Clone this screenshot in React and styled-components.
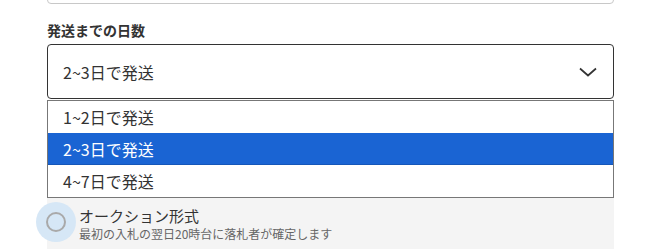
import React from "react";
import styled, { createGlobalStyle } from "styled-components";

const GlobalStyle = createGlobalStyle`
    html, body {
        margin: 0;
        padding: 0;
        background: #fff;
        overflow: hidden;
    }
    body {
        font-family: "Noto Sans CJK JP", "Noto Sans", sans-serif;
        color: #333;
    }
`;

const options = ["1~2日で発送", "2~3日で発送", "4~7日で発送"];

const App = () => {
    const selected = 1;
    return (
        <Wrapper>
            <GlobalStyle />
            <PrevInput />
            <Label>発送までの日数</Label>
            <SelectBox>
                <span>{options[selected]}</span>
                <svg width="18" height="10" viewBox="0 0 18 10">
                    <polyline
                        points="1,1.5 9,8.5 17,1.5"
                        fill="none"
                        stroke="#333"
                        strokeWidth="1.7"
                    />
                </svg>
            </SelectBox>
            <OptionList>
                {options.map((o, i) => (
                    <Option key={o} $active={i === selected}>
                        {o}
                    </Option>
                ))}
            </OptionList>
            <RadioPanel>
                <Radio>
                    <span className="ring" />
                </Radio>
                <div>
                    <RadioTitle>オークション形式</RadioTitle>
                    <RadioNote>最初の入札の翌日20時台に落札者が確定します</RadioNote>
                </div>
            </RadioPanel>
        </Wrapper>
    );
};

const Wrapper = styled.section`
    width: 567px;
    padding: 0 35px 0 47px;
    display: flex;
    flex-direction: column;
`;

const PrevInput = styled.div`
    height: 44px;
    margin-top: -40px;
    box-sizing: border-box;
    border: 1px solid #c8c8c8;
    border-radius: 4px;
`;

const Label = styled.h3`
    margin: 16px 0 0 0;
    font-size: 14px;
    font-weight: 700;
    line-height: 20px;
    color: #333;
`;

const SelectBox = styled.div`
    margin-top: 4px;
    height: 55px;
    box-sizing: border-box;
    border: 1px solid #333;
    border-radius: 4px;
    display: flex;
    align-items: center;
    justify-content: space-between;
    padding: 0 16px 0 15px;
    font-size: 16px;
    color: #333;

    svg {
        margin-top: 1px;
    }
`;

const OptionList = styled.ul`
    list-style: none;
    margin: 1px 0 0 0;
    padding: 0;
    border: 1px solid #777;
    background: #fff;
`;

const Option = styled.li`
    height: 32px;
    line-height: 32px;
    padding-left: 15px;
    font-size: 16px;
    background: ${({ $active }) => ($active ? "#1a64d3" : "#fff")};
    color: ${({ $active }) => ($active ? "#fff" : "#333")};
    box-shadow: ${({ $active }) => ($active ? "inset 0 -1px 0 #1556b8" : "none")};
`;

const RadioPanel = styled.div`
    background: #f4f4f4;
    height: 52px;
    display: flex;
    align-items: flex-start;
    padding-top: 8px;
    gap: 3px;
`;

const Radio = styled.div`
    width: 40px;
    height: 40px;
    margin: -4px 0 0 -11px;
    border-radius: 50%;
    background: #d6e7f6;
    display: flex;
    align-items: center;
    justify-content: center;
    flex-shrink: 0;

    .ring {
        width: 20px;
        height: 20px;
        box-sizing: border-box;
        border: 2px solid #a9a9a9;
        border-radius: 50%;
    }
`;

const RadioTitle = styled.div`
    font-size: 15px;
    line-height: 20px;
    color: #333;
`;

const RadioNote = styled.div`
    font-size: 12px;
    line-height: 16px;
    color: #666;
`;

export default App;
